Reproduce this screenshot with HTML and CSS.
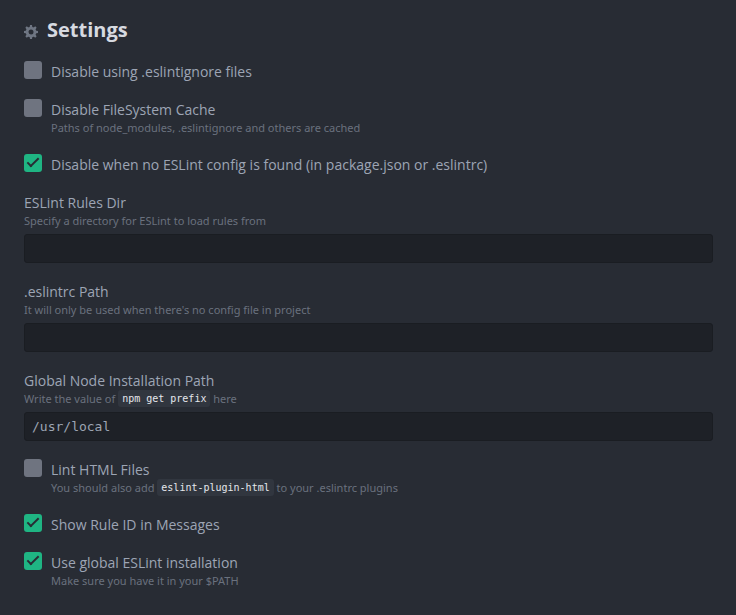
FILE: index.html
```html
<!DOCTYPE html>
<html lang="en">
<head>
<meta charset="utf-8">
<title>Settings</title>
<link rel="stylesheet" href="styles.css">
</head>
<body>
<main class="settings">
  <h1 class="heading">
    <svg class="gear" viewBox="0 0 14 14" aria-hidden="true"><g fill="currentColor"><path fill-rule="evenodd" d="M7 1.700a5.300 5.300 0 1 0 0 10.600A5.300 5.300 0 0 0 7 1.700zm0 2.800a2.500 2.500 0 1 1 0 5 2.500 2.500 0 0 1 0-5z"/><path id="t" d="M5.600 2.800 6 0h2l.4 2.800zM5.600 11.200l.4 2.800h2l.4-2.800z"/><use href="#t" transform="rotate(45 7 7)"/><use href="#t" transform="rotate(90 7 7)"/><use href="#t" transform="rotate(135 7 7)"/></g></svg>
    Settings
  </h1>
  <form class="options">
    <div class="option">
      <input class="box" type="checkbox" id="ignore">
      <label class="name" for="ignore">Disable using .eslintignore files</label>
    </div>
    <div class="option">
      <input class="box" type="checkbox" id="cache">
      <label class="name" for="cache">Disable FileSystem Cache</label>
      <p class="hint">Paths of node_modules, .eslintignore and others are cached</p>
    </div>
    <div class="option">
      <input class="box" type="checkbox" id="noconfig" checked>
      <label class="name" for="noconfig">Disable when no ESLint config is found (in package.json or .eslintrc)</label>
    </div>
    <div class="field">
      <label class="name" for="rules">ESLint Rules Dir</label>
      <p class="hint">Specify a directory for ESLint to load rules from</p>
      <input class="text" type="text" id="rules">
    </div>
    <div class="field">
      <label class="name" for="rc">.eslintrc Path</label>
      <p class="hint">It will only be used when there's no config file in project</p>
      <input class="text" type="text" id="rc">
    </div>
    <div class="field">
      <label class="name" for="node">Global Node Installation Path</label>
      <p class="hint">Write the value of <code>npm get prefix</code> here</p>
      <input class="text" type="text" id="node" value="/usr/local">
    </div>
    <div class="option">
      <input class="box" type="checkbox" id="html">
      <label class="name" for="html">Lint HTML Files</label>
      <p class="hint">You should also add <code>eslint-plugin-html</code> to your .eslintrc plugins</p>
    </div>
    <div class="option">
      <input class="box" type="checkbox" id="ruleid" checked>
      <label class="name" for="ruleid">Show Rule ID in Messages</label>
    </div>
    <div class="option">
      <input class="box" type="checkbox" id="global" checked>
      <label class="name" for="global">Use global ESLint installation</label>
      <p class="hint">Make sure you have it in your $PATH</p>
    </div>
  </form>
</main>
</body>
</html>
```
FILE: styles.css
```css
*,
*::before {
  box-sizing: border-box;
}

body {
  margin: 0;
  background: #282c34;
  color: #9da5b4;
  font-family: "Open Sans", "Noto Sans", sans-serif;
}

.settings {
  padding: 16px 23px 24px 24px;
}

.heading {
  display: flex;
  align-items: center;
  gap: 9px;
  margin: 0 0 19px;
  color: #d7dae0;
  font-size: 20px;
  line-height: 27px;
  font-weight: 700;
}

.gear {
  width: 14px;
  height: 14px;
  margin-top: 4px;
  color: #6f7683;
}

.options {
  display: flex;
  flex-direction: column;
  gap: 19px;
}

.option {
  display: grid;
  grid-template-columns: 18px 1fr;
  column-gap: 9px;
}

.option .hint {
  grid-column: 2;
}

.box {
  appearance: none;
  display: grid;
  place-items: center;
  width: 18px;
  height: 18px;
  margin: -1px 0 0;
  border-radius: 3px;
  background: #6f7480;
}

.box:checked {
  background: #1fb583;
}

.box:checked::before {
  content: "";
  width: 12px;
  height: 6px;
  margin-top: -4px;
  border: solid #282c34;
  border-width: 0 0 2px 2px;
  transform: rotate(-45deg);
}

.name {
  display: block;
  font-size: 14px;
  line-height: 19px;
}

.hint {
  margin: 0;
  color: #6a717e;
  font-family: "Noto Sans", sans-serif;
  font-size: 11px;
  line-height: 17px;
}

.hint code {
  display: inline-block;
  padding: 0 4px;
  border-radius: 3px;
  background: #31363f;
  color: #e4e7ec;
  font-family: "DejaVu Sans Mono", monospace;
  font-size: 10px;
  line-height: 17px;
  vertical-align: top;
}

.text {
  display: block;
  width: 100%;
  height: 29px;
  margin-top: 5px;
  padding: 0 7px;
  border: 1px solid #1a1d22;
  border-radius: 3px;
  background: #1e2127;
  color: #9da5b4;
  font-family: "DejaVu Sans Mono", monospace;
  font-size: 13px;
}
```
